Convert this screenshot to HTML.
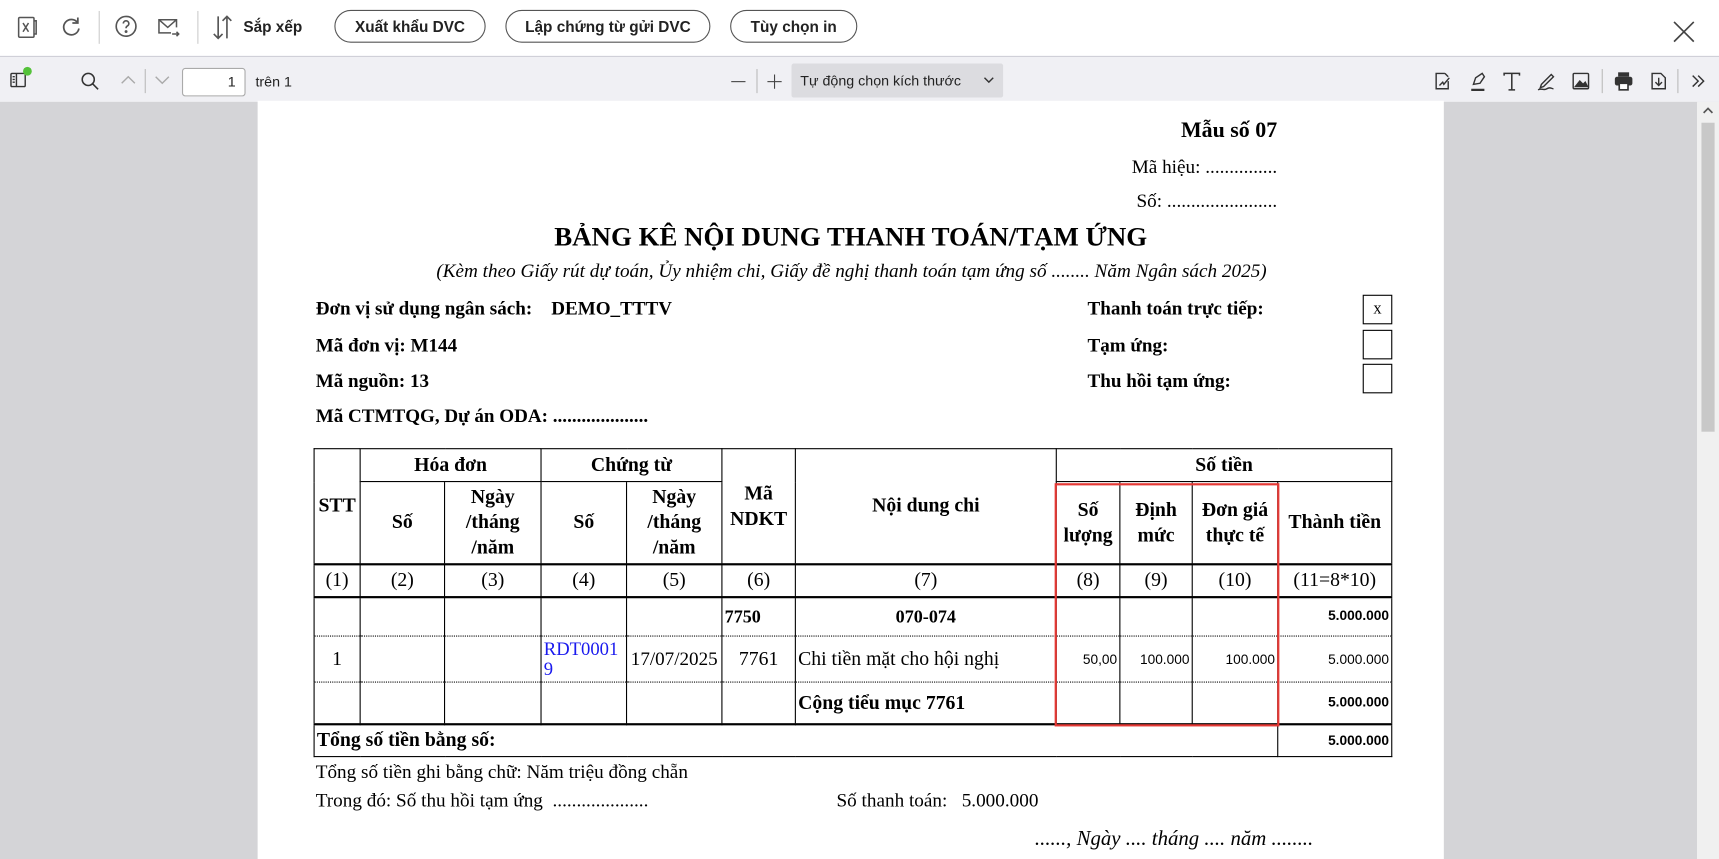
<!DOCTYPE html>
<html><head><meta charset="utf-8">
<style>
html,body{margin:0;padding:0;width:1719px;height:859px;overflow:hidden;background:#fff}
#w{position:absolute;left:0;top:0;width:1568px;height:784px;transform:scale(1.0963,1.0957);transform-origin:0 0;font-family:"Liberation Sans",sans-serif;color:#222}
.a{position:absolute}
.btn{position:absolute;top:9px;height:28px;border:1.3px solid #555;border-radius:15px;font-size:14px;font-weight:bold;line-height:28px;text-align:center;color:#222}
.sep{position:absolute;width:1px;background:#ccc}
.pg{position:absolute;left:235px;top:92px;width:1082px;height:692px;background:#fff;font-family:"Liberation Serif",serif;color:#000}
.t{position:absolute;white-space:nowrap}
.b{font-weight:bold}
.box{position:absolute;left:1008px;width:25px;height:25px;border:1px solid #000;text-align:center;line-height:25px;font-size:15px}
table{position:absolute;left:51px;top:317px;border-collapse:collapse;table-layout:fixed;width:984px;font-family:"Liberation Serif",serif}
td{border:1px solid #000;padding:0 2px;text-align:center;font-size:18px;overflow:hidden;white-space:nowrap}
.h td{font-weight:bold;line-height:23px}
.d{border-bottom:1px dotted #000}
.dt{border-top:1px dotted #000}
.n{font-family:"Liberation Sans",sans-serif;font-size:12.5px;text-align:right}
</style></head><body><div id="w">
<svg class="a" style="left:14px;top:14px" width="22" height="22" viewBox="0 0 22 22" fill="none" stroke="#555" stroke-width="1.4"><rect x="3" y="2" width="14" height="18" rx="1"/><path d="M17 5h2v12h-2"/><path d="M7 7l5 8M12 7l-5 8"/></svg>
<svg class="a" style="left:54px;top:13px" width="22" height="22" viewBox="0 0 22 22" fill="none" stroke="#555" stroke-width="1.6"><path d="M17 8A7 7 0 1 0 18 13"/><path d="M17 3v5h-5"/></svg>
<div class="sep" style="left:90px;top:10px;height:30px"></div>
<svg class="a" style="left:104px;top:13px" width="22" height="22" viewBox="0 0 22 22" fill="none" stroke="#555" stroke-width="1.5"><circle cx="11" cy="11" r="9"/><path d="M8.5 8.5a2.5 2.5 0 1 1 3.5 2.3c-.8.4-1 1-1 2"/><circle cx="11" cy="15.8" r=".6" fill="#555"/></svg>
<svg class="a" style="left:142px;top:14px" width="24" height="22" viewBox="0 0 24 22" fill="none" stroke="#555" stroke-width="1.4"><path d="M14 16H3V4h16v7"/><path d="M3 4l8 7 8-7"/><path d="M15 17h6M19 15l2 2-2 2"/></svg>
<div class="sep" style="left:180px;top:10px;height:30px"></div>
<svg class="a" style="left:192px;top:12px" width="22" height="26" viewBox="0 0 22 26" fill="none" stroke="#555" stroke-width="1.5"><path d="M7 3v20M3 19l4 4 4-4M15 23V3M11 7l4-4 4 4"/></svg>
<div class="t b" style="left:222px;top:16px;font-size:14px;color:#222">Sắp xếp</div>
<div class="btn" style="left:305px;width:136px">Xuất khẩu DVC</div>
<div class="btn" style="left:461px;width:185px">Lập chứng từ gửi DVC</div>
<div class="btn" style="left:666px;width:114px">Tùy chọn in</div>
<svg class="a" style="left:1525px;top:18px" width="22" height="22" viewBox="0 0 22 22" stroke="#444" stroke-width="1.5"><path d="M2 2l18 18M20 2L2 20"/></svg>
<div class="a" style="left:0;top:51px;width:1568px;height:41px;background:#f0f0f4;border-top:1px solid #cfcfd8;border-bottom:1px solid #d8d8dc"></div>
<svg class="a" style="left:8px;top:64px" width="20" height="18" viewBox="0 0 20 18" fill="none" stroke="#333" stroke-width="1.3"><rect x="2" y="3" width="13" height="12" rx="1"/><path d="M7 3v12M3.5 6h2M3.5 8.5h2M3.5 11h2"/></svg>
<div class="a" style="left:21px;top:61px;width:8px;height:8px;border-radius:50%;background:#54c23a"></div>
<svg class="a" style="left:73px;top:65px" width="18" height="18" viewBox="0 0 18 18" fill="none" stroke="#333" stroke-width="1.4"><circle cx="7.5" cy="7.5" r="5.5"/><path d="M11.5 11.5l5 5"/></svg>
<svg class="a" style="left:109px;top:68px" width="16" height="10" viewBox="0 0 16 10" fill="none" stroke="#aaa" stroke-width="1.3"><path d="M2 8l6-6 6 6"/></svg>
<div class="sep" style="left:132px;top:63px;height:22px;background:#bbb"></div>
<svg class="a" style="left:140px;top:68px" width="16" height="10" viewBox="0 0 16 10" fill="none" stroke="#aaa" stroke-width="1.3"><path d="M2 2l6 6 6-6"/></svg>
<div class="a" style="left:166px;top:62px;width:58px;background:#fff;border:1px solid #aaa;border-radius:3px;font-size:13px;text-align:right;line-height:24px;box-sizing:border-box;padding-right:8px;height:26px">1</div>
<div class="t" style="left:233px;top:67px;font-size:13px;color:#222">trên 1</div>
<div class="a" style="left:667px;top:74px;width:13px;height:1.4px;background:#444"></div>
<div class="sep" style="left:690px;top:63px;height:22px;background:#bbb"></div>
<div class="a" style="left:700px;top:74px;width:13px;height:1.4px;background:#444"></div>
<div class="a" style="left:706px;top:68px;width:1.4px;height:13px;background:#444"></div>
<div class="a" style="left:722px;top:58px;width:193px;height:31px;background:#dcdce0;border-radius:2px"></div>
<div class="t" style="left:730px;top:66px;font-size:13px;color:#222">Tự động chọn kích thước</div>
<svg class="a" style="left:897px;top:70px" width="10" height="7" viewBox="0 0 10 7" fill="none" stroke="#333" stroke-width="1.3"><path d="M1 1l4 4 4-4"/></svg>
<svg class="a" style="left:1306px;top:64px" width="20" height="20" viewBox="0 0 20 20" fill="none" stroke="#333" stroke-width="1.3"><path d="M12 3H4v14h11v-7"/><path d="M12 3l3 3"/><path d="M7 14l3-3 1 2 5-6"/></svg>
<svg class="a" style="left:1338px;top:64px" width="20" height="20" viewBox="0 0 20 20" fill="none" stroke="#333" stroke-width="1.3"><path d="M6 13l2-6 6-4 2 3-4 6z"/><path d="M4 18h12" stroke-width="2"/></svg>
<svg class="a" style="left:1369px;top:64px" width="20" height="20" viewBox="0 0 20 20" fill="none" stroke="#333" stroke-width="1.4"><path d="M3 5V3h14v2M10 3v15M7 18h6"/></svg>
<svg class="a" style="left:1400px;top:64px" width="20" height="20" viewBox="0 0 20 20" fill="none" stroke="#333" stroke-width="1.3"><path d="M6 13l9-9 2 2-9 9-3 1z"/><path d="M3 18c3-2 5 1 8-1s4 0 6 0"/></svg>
<svg class="a" style="left:1432px;top:64px" width="20" height="20" viewBox="0 0 20 20" fill="none" stroke="#333" stroke-width="1.3"><rect x="3" y="3" width="14" height="14" rx="1"/><path d="M5 15l4-5 3 3 2-2 2 4z" fill="#333"/></svg>
<div class="sep" style="left:1461px;top:63px;height:22px;background:#bbb"></div>
<svg class="a" style="left:1471px;top:64px" width="20" height="20" viewBox="0 0 20 20"><rect x="5" y="2" width="10" height="4" fill="#333"/><rect x="2" y="6" width="16" height="8" rx="2" fill="#333"/><rect x="6" y="12" width="8" height="6" fill="#fff" stroke="#333" stroke-width="1.5"/></svg>
<svg class="a" style="left:1503px;top:64px" width="20" height="20" viewBox="0 0 20 20" fill="none" stroke="#333" stroke-width="1.3"><path d="M4 3h8l4 4v10H4z"/><path d="M10 7v7M7 11l3 3 3-3"/></svg>
<div class="sep" style="left:1530px;top:63px;height:22px;background:#bbb"></div>
<svg class="a" style="left:1541px;top:66px" width="16" height="16" viewBox="0 0 16 16" fill="none" stroke="#333" stroke-width="1.3"><path d="M3 3l5 5-5 5M8 3l5 5-5 5"/></svg>
<div class="a" style="left:0;top:93px;width:1548px;height:691px;background:#d4d4d7"></div>
<div class="a" style="left:1548px;top:93px;width:20px;height:691px;background:#f0f0f0"></div>
<div class="a" style="left:1552px;top:112px;width:12px;height:282px;background:#c8c8c8"></div>
<svg class="a" style="left:1552px;top:96px" width="12" height="10" viewBox="0 0 12 10"><path d="M2 7l4-4 4 4" fill="none" stroke="#555" stroke-width="1.5"/></svg>
<div class="pg">
<div class="t b" style="right:152px;top:16px;font-size:20px">Mẫu số 07</div>
<div class="t" style="right:152px;top:50px;font-size:17.5px">Mã hiệu: ...............</div>
<div class="t" style="right:152px;top:81px;font-size:17.5px">Số: .......................</div>
<div class="t b" style="left:0;width:1082px;text-align:center;top:111px;font-size:24.5px">BẢNG KÊ NỘI DUNG THANH TOÁN/TẠM ỨNG</div>
<div class="t" style="left:163px;top:145px;font-size:17.5px;font-style:italic">(Kèm theo Giấy rút dự toán, Ủy nhiệm chi, Giấy đề nghị thanh toán tạm ứng số ........ Năm Ngân sách 2025)</div>
<div class="t b" style="left:53px;top:179px;font-size:17.4px">Đơn vị sử dụng ngân sách:&nbsp;&nbsp;&nbsp; DEMO_TTTV</div>
<div class="t b" style="left:53px;top:213px;font-size:17.4px">Mã đơn vị: M144</div>
<div class="t b" style="left:53px;top:245px;font-size:17.4px">Mã nguồn: 13</div>
<div class="t b" style="left:53px;top:277px;font-size:17.4px">Mã CTMTQG, Dự án ODA: ....................</div>
<div class="t b" style="left:757px;top:179px;font-size:17.4px">Thanh toán trực tiếp:</div>
<div class="t b" style="left:757px;top:213px;font-size:17.4px">Tạm ứng:</div>
<div class="t b" style="left:757px;top:245px;font-size:17.4px">Thu hồi tạm ứng:</div>
<div class="box" style="top:177px">x</div>
<div class="box" style="top:209px"></div>
<div class="box" style="top:240px"></div>
<table>
<colgroup><col style="width:42px"><col style="width:77px"><col style="width:88px"><col style="width:78px"><col style="width:87px"><col style="width:67px"><col style="width:238px"><col style="width:58px"><col style="width:66px"><col style="width:78px"><col style="width:104px"></colgroup>
<tr class="h" style="height:30px"><td rowspan="2">STT</td><td colspan="2">Hóa đơn</td><td colspan="2">Chứng từ</td><td rowspan="2">Mã<br>NDKT</td><td rowspan="2">Nội dung chi</td><td colspan="4">Số tiền</td></tr>
<tr class="h" style="height:75px"><td>Số</td><td>Ngày<br>/tháng<br>/năm</td><td>Số</td><td>Ngày<br>/tháng<br>/năm</td><td>Số<br>lượng</td><td>Định<br>mức</td><td>Đơn giá<br>thực tế</td><td>Thành tiền</td></tr>
<tr style="height:30px;border-top:2px solid #000;border-bottom:2px solid #000"><td>(1)</td><td>(2)</td><td>(3)</td><td>(4)</td><td>(5)</td><td>(6)</td><td>(7)</td><td>(8)</td><td>(9)</td><td>(10)</td><td>(11=8*10)</td></tr>
<tr style="height:36px" class="h"><td class="d"></td><td class="d"></td><td class="d"></td><td class="d"></td><td class="d"></td><td class="d" style="text-align:left;font-size:16.5px">7750</td><td class="d" style="font-size:16.5px">070-074</td><td class="d"></td><td class="d"></td><td class="d"></td><td class="d n" style="font-weight:bold">5.000.000</td></tr>
<tr style="height:42px"><td class="d dt">1</td><td class="d dt"></td><td class="d dt"></td><td class="d dt" style="text-align:left;color:#1a1aee;font-size:17px;line-height:18px">RDT0001<br>9</td><td class="d dt" style="font-size:17.4px">17/07/2025</td><td class="d dt">7761</td><td class="d dt" style="text-align:left">Chi tiền mặt cho hội nghị</td><td class="d dt n">50,00</td><td class="d dt n">100.000</td><td class="d dt n">100.000</td><td class="d dt n">5.000.000</td></tr>
<tr style="height:38px" class="h"><td class="dt"></td><td class="dt"></td><td class="dt"></td><td class="dt"></td><td class="dt"></td><td class="dt"></td><td class="dt" style="text-align:left">Cộng tiểu mục 7761</td><td class="dt"></td><td class="dt"></td><td class="dt"></td><td class="dt n" style="font-weight:bold">5.000.000</td></tr>
<tr style="height:30px;border-top:2px solid #000"><td colspan="10" style="text-align:left;font-weight:bold">Tổng số tiền bằng số:</td><td class="n" style="font-weight:bold">5.000.000</td></tr>
</table>
<div class="a" style="left:727px;top:349px;width:201px;height:218px;border:2px solid #e53935"></div>
<div class="t" style="left:53px;top:602px;font-size:17.5px">Tổng số tiền ghi bằng chữ: Năm triệu đồng chẵn</div>
<div class="t" style="left:53px;top:628px;font-size:17.5px">Trong đó: Số thu hồi tạm ứng&nbsp; ....................</div>
<div class="t" style="left:528px;top:628px;font-size:17.5px">Số thanh toán:&nbsp;&nbsp; 5.000.000</div>
<div class="t" style="left:709px;top:663px;font-size:19px;font-style:italic">......, Ngày .... tháng .... năm ........</div>
</div>
</div></body></html>
